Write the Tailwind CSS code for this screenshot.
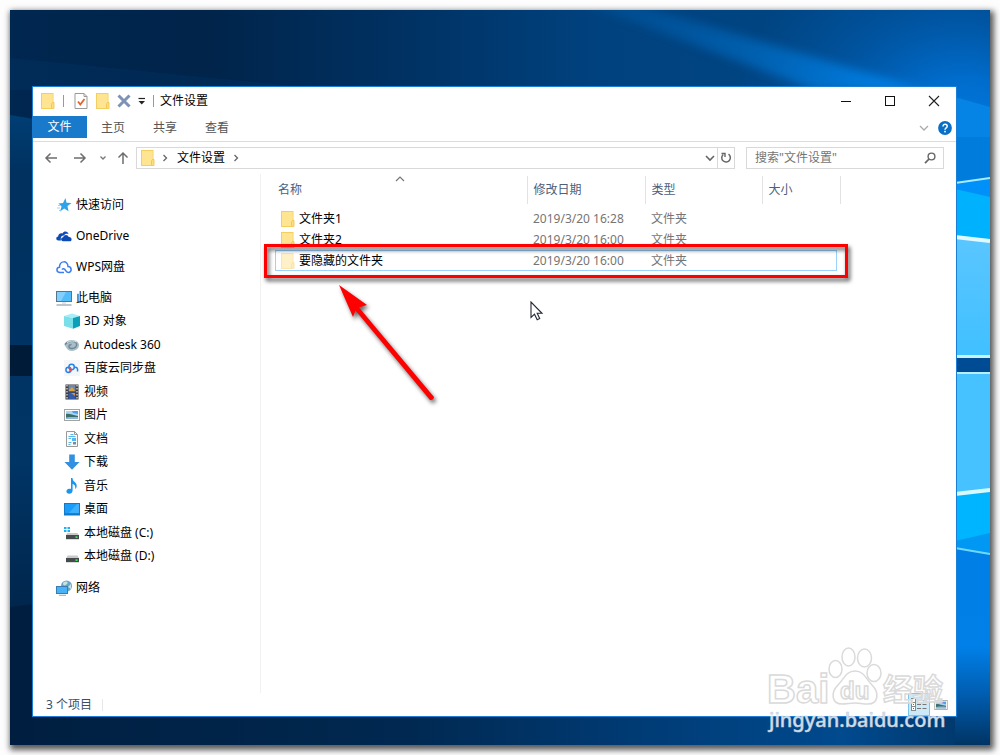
<!DOCTYPE html>
<html lang="zh-CN">
<head>
<meta charset="utf-8">
<meta name="viewport" content="width=device-width, initial-scale=1">
<title>文件设置</title>
<script src="https://cdn.jsdelivr.net/npm/@tailwindcss/browser@4"></script>
</head>
<body class="flex min-h-screen bg-[#fdfdfd] p-2.5 font-['Noto_Sans','Noto_Sans_CJK_SC',sans-serif] text-xs text-black">

<!-- shared symbols -->
<svg class="hidden" aria-hidden="true">
  <symbol id="folder" viewBox="0 0 14 16">
    <rect x="0.5" y="0.5" width="11.5" height="15" fill="#ffe591" stroke="#f3cf62"/>
    <path d="M1 1h10.500v14.500H1z" fill="#ffe591"/>
    <path d="M10.500 15.500V11l1-1.500h1.500v6z" fill="#fddf80" stroke="#efc54f" stroke-width=".9"/>
    <path d="M.500 15.500h12" stroke="#f3cf62"/>
  </symbol>
  <symbol id="right" viewBox="0 0 8 8"><path d="M2.500 1l3 3-3 3" fill="none" stroke="#666" stroke-width="1.300"/></symbol>
  <symbol id="picture" viewBox="0 0 16 12">
    <rect x=".5" y=".5" width="15" height="11" fill="#fff" stroke="#a3a3a3"/>
    <rect x="2" y="2" width="12" height="8" fill="#a9d6f7"/>
    <path d="M8 2h6v3L9 4z" fill="#4d9df0"/>
    <path d="M2 5c3-1 6 1 12 2v3H2z" fill="#3c6f68"/>
    <path d="M2 8.500c4-.8 8-.5 12-.5v2H2z" fill="#8fb9dc"/>
  </symbol>
</svg>

<div class="relative flex flex-1 overflow-visible bg-[#002d5a] pt-[76px] pr-[33px] pb-[28px] pl-[22px] shadow-[2px_3px_6px_2px_rgba(0,0,0,0.65)]">

  <!-- wallpaper -->
  <svg class="absolute inset-0 size-full" viewBox="10 10 980 735" preserveAspectRatio="none" aria-hidden="true">
    <defs>
      <linearGradient id="top" x1="0" x2="1" y1="0" y2="0">
        <stop offset="0" stop-color="#002750"/><stop offset=".2" stop-color="#00244a"/><stop offset=".38" stop-color="#003060"/><stop offset=".6" stop-color="#00427f"/><stop offset=".85" stop-color="#004684"/><stop offset="1" stop-color="#003f78"/>
      </linearGradient>
      <radialGradient id="glow" gradientUnits="userSpaceOnUse" cx="965" cy="150" r="240">
        <stop offset="0" stop-color="#0082ee"/><stop offset=".3" stop-color="#0074da" stop-opacity=".85"/><stop offset=".65" stop-color="#0060b8" stop-opacity=".45"/><stop offset="1" stop-color="#0054a4" stop-opacity="0"/>
      </radialGradient>
      <linearGradient id="beam" gradientUnits="userSpaceOnUse" x1="600" y1="10" x2="890" y2="90">
        <stop offset="0" stop-color="#005ba8" stop-opacity=".35"/><stop offset="1" stop-color="#0086ee" stop-opacity=".8"/>
      </linearGradient>
      <linearGradient id="bottom" x1="0" x2="1" y1="0" y2="0">
        <stop offset="0" stop-color="#001f40"/><stop offset=".4" stop-color="#002850"/><stop offset=".65" stop-color="#003c76"/><stop offset=".85" stop-color="#004a8e"/><stop offset="1" stop-color="#003464"/>
      </linearGradient>
      <linearGradient id="left" x1="0" x2="0" y1="0" y2="1">
        <stop offset="0" stop-color="#003e74"/><stop offset=".12" stop-color="#00315f"/><stop offset=".7" stop-color="#003566"/><stop offset="1" stop-color="#00264c"/>
      </linearGradient>
      <linearGradient id="fall" x1="0" x2="0" y1="0" y2="1">
        <stop offset="0" stop-color="#0080e6"/><stop offset=".5" stop-color="#0080e8"/><stop offset=".75" stop-color="#005cae"/><stop offset="1" stop-color="#003464"/>
      </linearGradient>
      <linearGradient id="pane" x1="0" x2="0" y1="0" y2="1">
        <stop offset="0" stop-color="#5ac6ff"/><stop offset="1" stop-color="#40c0ff"/>
      </linearGradient>
      <filter id="soft" x="-10%" y="-20%" width="120%" height="140%"><feGaussianBlur stdDeviation="5"/></filter>
    </defs>
    <rect x="10" y="10" width="980" height="735" fill="url(#top)"/>
    <path d="M10 58L335 90H10z" fill="#00396b" opacity=".3"/>
    <rect x="700" y="10" width="290" height="190" fill="url(#glow)"/>
    <path d="M575 0h45L925 90H815z" fill="url(#beam)" filter="url(#soft)"/>
    <rect x="10" y="700" width="980" height="45" fill="url(#bottom)"/>
    <path d="M10 115l24 4v490H10z" fill="url(#left)"/>
    <rect x="10" y="345" width="24" height="31" fill="#001b38"/>
    <path d="M10 607l24-3v141H10z" fill="#001f40"/>
    <rect x="955" y="125" width="35" height="60" fill="#007cdc"/>
    <path d="M955 97l35 10v30h-35z" fill="#0584e6"/>
    <path d="M955 183l35-5v64l-35-5z" fill="#00b2fd"/>
    <path d="M955 183l35-5v19l-35-8z" fill="#0090fa"/>
    <path d="M955 183l35-5" stroke="#a8ecff" stroke-width="2"/>
    <path d="M955 237l35 4v116h-35z" fill="url(#pane)"/>
    <path d="M955 237l35 4" stroke="#e0faff" stroke-width="4"/>
    <rect x="955" y="355" width="35" height="3" fill="#c8f2ff"/>
    <rect x="955" y="358" width="35" height="14" fill="#004c94"/>
    <path d="M955 372h35v118l-35 4z" fill="#45c2ff"/>
    <rect x="955" y="372" width="35" height="2" fill="#b8eeff"/>
    <path d="M955 494l35-4v64l-35-6z" fill="#00b5ff"/>
    <path d="M955 541l35-8v20l-35-5z" fill="#0098f2"/>
    <path d="M955 494l35-4" stroke="#d8f8ff" stroke-width="4"/>
    <path d="M955 548l35 6v191h-35z" fill="url(#fall)"/>
    <path d="M955 548l35 6" stroke="#70d8ff" stroke-width="2"/>
  </svg>

  <!-- explorer window -->
  <main class="relative flex flex-1 flex-col border border-[#1b7fd6] bg-white">

    <header class="flex h-[27px] items-center pl-2">
      <svg class="h-4 w-3.5"><use href="#folder"/></svg>
      <span class="ml-2 h-3 w-px bg-[#999]"></span>
      <button class="ml-2.5" aria-label="属性"><svg class="h-4 w-3.5" viewBox="0 0 14 16"><path d="M1 .5h9l3 3v12H1z" fill="#fff" stroke="#999"/><path d="M10 .5v3h3" fill="none" stroke="#999"/><path d="M4 8.500l2.300 3L10.500 6" fill="none" stroke="#e8622c" stroke-width="1.800"/></svg></button>
      <button class="ml-2" aria-label="新建文件夹"><svg class="h-4 w-3.5"><use href="#folder"/></svg></button>
      <button class="ml-[7px]" aria-label="删除"><svg class="h-3.5 w-3.5" viewBox="0 0 14 14"><path d="M1.500 1.500l11 11M12.500 1.500l-11 11" stroke="#7d92b5" stroke-width="3"/></svg></button>
      <button class="ml-[7px]" aria-label="自定义快速访问工具栏"><svg class="h-2 w-2" viewBox="0 0 8 8"><path d="M.500 1.500h6.500" stroke="#222" stroke-width="1.200"/><path d="M.500 4h6.500L3.750 7.500z" fill="#222"/></svg></button>
      <span class="ml-[7px] h-3 w-px bg-[#999]"></span>
      <h1 class="ml-1.5 flex-1">文件设置</h1>
      <button class="flex h-full w-11 items-center justify-center" aria-label="最小化"><svg class="h-3 w-3" viewBox="0 0 12 12"><path d="M1 6.500h10" stroke="#111"/></svg></button>
      <button class="flex h-full w-11 items-center justify-center" aria-label="最大化"><svg class="h-3 w-3" viewBox="0 0 12 12"><rect x="1.500" y="1.500" width="9" height="9" fill="none" stroke="#111"/></svg></button>
      <button class="flex h-full w-11 items-center justify-center" aria-label="关闭"><svg class="h-3 w-3" viewBox="0 0 12 12"><path d="M1 1l10 10M11 1L1 11" stroke="#222" stroke-width="1.100"/></svg></button>
    </header>

    <div class="flex h-[28px] items-start border-b border-[#dcdcdc] pt-0.5 text-[#555]">
      <button class="-ml-px h-[22px] w-[55px] bg-[#1979ca] text-white">文件</button>
      <button class="h-6 w-[52px]">主页</button>
      <button class="h-6 w-[52px]">共享</button>
      <button class="h-6 w-[52px]">查看</button>
      <button class="ml-auto flex h-6 w-5 items-center justify-center" aria-label="展开功能区"><svg class="h-2 w-2.5" viewBox="0 0 10 8"><path d="M1 2l4 4 4-4" fill="none" stroke="#aaa" stroke-width="1.300"/></svg></button>
      <button class="mr-1 ml-1 flex h-6 items-center" aria-label="帮助"><svg class="h-3.5 w-3.5" viewBox="0 0 14 14"><circle cx="7" cy="7" r="6.900" fill="#0a6fc6"/><path d="M5 5.400c0-2.800 4.200-2.600 4.200-.2C9.200 6.900 7 6.800 7 8.800" fill="none" stroke="#fff" stroke-width="1.500"/><rect x="6.200" y="9.800" width="1.600" height="1.600" fill="#fff"/></svg></button>
    </div>

    <div class="flex h-8 items-center pr-3 pl-[11px]">
      <button aria-label="后退"><svg class="h-3 w-3.5" viewBox="0 0 14 12"><path d="M13 6H2M6.500 1.500L2 6l4.500 4.500" fill="none" stroke="#6e6e6e" stroke-width="1.500"/></svg></button>
      <button class="ml-[15px]" aria-label="前进"><svg class="h-3 w-3.5" viewBox="0 0 14 12"><path d="M1 6h11M7.500 1.500L12 6l-4.500 4.500" fill="none" stroke="#6e6e6e" stroke-width="1.500"/></svg></button>
      <button class="ml-3" aria-label="最近位置"><svg class="h-2 w-2" viewBox="0 0 8 8"><path d="M1.500 2.500L4 5l2.500-2.500" fill="none" stroke="#777" stroke-width="1.300"/></svg></button>
      <button class="ml-[9px]" aria-label="上移"><svg class="h-3.5 w-3.5" viewBox="0 0 14 14"><path d="M7 13V2M2.500 6.500L7 2l4.500 4.500" fill="none" stroke="#6e6e6e" stroke-width="1.500"/></svg></button>
      <nav class="ml-1.5 flex h-[22px] flex-1 items-center border border-[#d9d9d9] pl-1" aria-label="地址">
        <svg class="h-4 w-3.5"><use href="#folder"/></svg>
        <svg class="ml-1.5 h-2 w-2"><use href="#right"/></svg>
        <a href="#" class="ml-2">文件设置</a>
        <svg class="ml-[7px] h-2 w-2"><use href="#right"/></svg>
        <button class="mr-0.5 ml-auto" aria-label="历史"><svg class="h-2 w-2.5" viewBox="0 0 10 8"><path d="M1 2l4 4 4-4" fill="none" stroke="#666" stroke-width="1.600"/></svg></button>
        <button class="flex h-full w-[17px] items-center justify-center border-l border-[#d9d9d9]" aria-label="刷新"><svg class="h-3 w-3" viewBox="0 0 12 12"><path d="M8.500 2.200A4.300 4.300 0 1 1 3.200 2.500" fill="none" stroke="#666" stroke-width="1.500"/><path d="M1.500 1.500h3.500V5" fill="none" stroke="#666" stroke-width="1.400"/></svg></button>
      </nav>
      <label class="ml-[11px] flex h-[22px] w-[198px] items-center border border-[#d9d9d9] pr-[7px] pl-2">
        <input class="min-w-0 flex-1 outline-none placeholder:text-[#757575]" type="search" aria-label="搜索" placeholder="搜索&quot;文件设置&quot;">
        <svg class="h-3 w-3" viewBox="0 0 12 12"><circle cx="7.500" cy="4.500" r="3.400" fill="none" stroke="#666" stroke-width="1.400"/><path d="M5 7L1 11.200" stroke="#666" stroke-width="1.800"/></svg>
      </label>
    </div>

    <div class="flex flex-1">
      <nav class="w-[228px] shrink-0 border-r border-[#f1f1f1] pt-[19px] pl-[23px]" aria-label="导航窗格">
        <ul class="flex flex-col gap-2">
          <li class="flex h-[23px] items-center gap-1"><svg class="h-4 w-4" viewBox="0 0 16 16"><path d="M9.500 1l1 4.700 5 .3-4 2.900 1 5.300L8.200 11.500 4 14.500l1.600-5L2.500 6.400l4.500-.5z" fill="#2fa2ea"/><path d="M2 8.500h2M1 11h3M3 13.500h1" stroke="#9bd5f8"/></svg><a href="#">快速访问</a></li>
          <li class="flex h-[23px] items-center gap-1"><svg class="h-4 w-4" viewBox="0 0 16 16"><path d="M2.500 12.500C-.500 12.500-.300 8.500 2.200 8.500 2 5.500 5.200 4.600 6.500 5.500c1.400-3 5.600-2.500 6 .8-2-1-3.700-.3-4.500 1.200-2-.3-4 1.500-3 5z" fill="#0b4bb3"/><path d="M7 13.200c-2.600 0-2.500-4 .2-4C7.800 6.300 12 6.200 12.700 9c3.300-.4 4 4.200 1 4.200z" fill="#0b4bb3"/></svg><a href="#">OneDrive</a></li>
          <li class="flex h-[23px] items-center gap-1"><svg class="h-4 w-4" viewBox="0 0 16 16"><path d="M8 13.500H4C0 13.500 0 8.700 3.500 8.300 3.500 1.200 12 1.200 12 7.500c4 0 4.200 6 .3 6-2.500 0-2.500-2-3.600-3.300-1-.9-2.400-.5-2.400.5" fill="none" stroke="#3c7df0" stroke-width="1.500"/></svg><a href="#">WPS网盘</a></li>
          <li>
            <ul class="grid h-[282px] auto-rows-fr">
              <li class="flex items-center gap-1"><svg class="h-4 w-4" viewBox="0 0 16 16"><rect x=".5" y="1.500" width="15" height="10" fill="#55bcfa" stroke="#54778f"/><path d="M1 2h9L5 11H1z" fill="#83d0ff"/><path d="M6 13h4" stroke="#c3ccd3"/><path d="M.500 15h15" stroke="#9aa8b5" stroke-width="1.300"/></svg><a href="#">此电脑</a></li>
              <li class="flex items-center gap-1 pl-2"><svg class="h-4 w-4" viewBox="0 0 16 16"><path d="M0 3l8-2.500L16 3 9 5z" fill="#a5eef5"/><path d="M0 3l9 2v10.800L0 13z" fill="#7adfe9"/><path d="M9 5l7-2v10l-7 2.800z" fill="#0aa0b8"/></svg><a href="#">3D 对象</a></li>
              <li class="flex items-center gap-1 pl-2"><svg class="h-4 w-4" viewBox="0 0 16 16"><path d="M.500 8C1 3 9 1.500 13 4.500c4 3 2 9-5 9.500-3 0-5-1.500-5.500-3z" fill="#a9bec9"/><path d="M1 7.500C4 3.500 11 3.500 12.500 6.500c1 2.500-1.500 5-4.500 5-4 0-4-4-.5-4" fill="none" stroke="#6f8896" stroke-width="1.500"/><path d="M3 5.500c3-2 7-2 9.500-.5" fill="none" stroke="#e3edf2"/></svg><a href="#">Autodesk 360</a></li>
              <li class="flex items-center gap-1 pl-2"><svg class="h-4 w-4" viewBox="0 0 16 16"><rect width="16" height="16" fill="#f5f6f8"/><circle cx="4.500" cy="9.800" r="2.600" fill="none" stroke="#2384ee" stroke-width="1.500"/><circle cx="7.600" cy="7" r="2.700" fill="none" stroke="#2384ee" stroke-width="1.500"/><path d="M4.500 8c2.500 0 2.500 3.500.2 3.500" fill="none" stroke="#ec4a4a" stroke-width="1.500"/><path d="M10 7.500c3-1 4 1 3.500 4" fill="none" stroke="#2384ee" stroke-width="1.500"/></svg><a href="#">百度云同步盘</a></li>
              <li class="flex items-center gap-1 pl-2"><svg class="h-4 w-4" viewBox="0 0 16 16"><rect x="1.500" y=".5" width="13" height="15" fill="#3b3b3f"/><rect x="4.500" y="1" width="7" height="6.500" fill="#7187ad"/><rect x="4.500" y="8.500" width="7" height="6.500" fill="#315cae"/><path d="M5 6l3-3 3 4H5z" fill="#dca33c"/><path d="M7 9h4v3z" fill="#e58645"/><path d="M3 1v14M13 1v14" stroke="#ddd" stroke-width="1.300" stroke-dasharray="1.500 1.500"/></svg><a href="#">视频</a></li>
              <li class="flex items-center gap-1 pl-2"><svg class="h-3 w-4"><use href="#picture"/></svg><a href="#">图片</a></li>
              <li class="flex items-center gap-1 pl-2"><svg class="h-4 w-4" viewBox="0 0 16 16"><path d="M2.500.500h8l3 3v12h-11z" fill="#fafafa" stroke="#999"/><path d="M10.500.500v3h3" fill="none" stroke="#999"/><path d="M6.500 3.500h3M4.500 5.500h7M4.500 7.500h2.500M4.500 11.500h3M4.500 13.500h2" stroke="#55b5ec"/><rect x="8" y="7" width="4" height="3" fill="#55b5ec"/><rect x="9" y="11" width="3" height="2.500" fill="#6b8fa5"/></svg><a href="#">文档</a></li>
              <li class="flex items-center gap-1 pl-2"><svg class="h-4 w-4" viewBox="0 0 16 16"><path d="M5.200.500h5.600v7.500h4.700L8 15.700.500 8h4.700z" fill="#3390e0"/></svg><a href="#">下载</a></li>
              <li class="flex items-center gap-1 pl-2"><svg class="h-4 w-4" viewBox="0 0 16 16"><path d="M7 0h1.500c0 4 4.500 4 4.200 8-.1 1.500-.7 2.500-1.500 3 .5-3-.7-4.500-2.600-5v6.500c0 2-1.600 3.300-3.400 3.300-3.700 0-3.700-4.600 0-5 .7-.1 1.300 0 1.800.2z" fill="#1b96f0"/></svg><a href="#">音乐</a></li>
              <li class="flex items-center gap-1 pl-2"><svg class="h-4 w-4" viewBox="0 0 16 16"><rect x=".5" y="2.500" width="15" height="11.500" fill="#1a9dfa" stroke="#1679c4"/><path d="M5 12L13 3h2v9z" fill="#3fb0fd"/><path d="M1 13h14" stroke="#0d67b4"/></svg><a href="#">桌面</a></li>
              <li class="flex items-center gap-1 pl-2"><svg class="h-4 w-4" viewBox="0 0 16 16"><path d="M0 2h2.500v2H0zM3.500 2H6v2H3.500zM0 5h2.500v2H0zM3.500 5H6v2H3.500z" fill="#1eb0f2"/><path d="M3 8h10.500l1.500 2.500H2z" fill="#c9c9c9"/><rect x="2" y="10" width="13" height="4.200" fill="#454b4d"/><rect x="11.500" y="11.300" width="2" height="1.700" fill="#3be85b"/></svg><a href="#">本地磁盘 (C:)</a></li>
              <li class="flex items-center gap-1 pl-2"><svg class="h-4 w-4" viewBox="0 0 16 16"><path d="M3.500 7.500h10L15 10.500H2z" fill="#c9c9c9"/><rect x="2" y="10" width="13" height="4.200" fill="#454b4d"/><rect x="11.500" y="11.300" width="2" height="1.700" fill="#3be85b"/></svg><a href="#">本地磁盘 (D:)</a></li>
            </ul>
          </li>
          <li class="flex h-[23px] items-center gap-1"><svg class="h-4 w-4" viewBox="0 0 16 16"><circle cx="10.500" cy="6" r="5.500" fill="#6aa5c4"/><path d="M7 3c3-3 6-1 4 1S7 6 7 3zM12 7l3-3v5z" fill="#c5e2e4"/><rect x=".5" y="6.500" width="11" height="7" fill="#47b2f8" stroke="#3b7cae"/><path d="M3 15.300h7" stroke="#a8b5bf" stroke-width="1.200"/></svg><a href="#">网络</a></li>
        </ul>
      </nav>

      <section class="relative min-w-0 flex-1 pl-3.5" aria-label="文件列表">
        <svg class="absolute top-px left-[134px] h-2 w-2.5" viewBox="0 0 10 8" aria-hidden="true"><path d="M1 6l4-4 4 4" fill="none" stroke="#777" stroke-width="1.200"/></svg>
        <table class="mt-0.5 w-[566px] table-fixed text-left text-[#757575]">
          <thead class="text-[#4c607a]">
            <tr class="h-7">
              <th class="w-[252px] border-r border-[#e2e2e2] pl-[3px] font-normal">名称</th>
              <th class="w-[118px] border-r border-[#e2e2e2] pl-1.5 font-normal">修改日期</th>
              <th class="w-[117px] border-r border-[#e2e2e2] pl-1.5 font-normal">类型</th>
              <th class="border-r border-[#e2e2e2] pl-1.5 font-normal">大小</th>
            </tr>
          </thead>
          <tbody>
            <tr class="h-1"><td colspan="4"></td></tr>
            <tr class="h-[21px]">
              <td class="pl-1.5 text-black"><span class="flex items-center gap-1"><svg class="h-4 w-3.5"><use href="#folder"/></svg>文件夹1</span></td>
              <td class="pl-1.5">2019/3/20 16:28</td><td class="pl-1.5">文件夹</td><td></td>
            </tr>
            <tr class="h-[21px]">
              <td class="pl-1.5 text-black"><span class="flex items-center gap-1"><svg class="h-4 w-3.5"><use href="#folder"/></svg>文件夹2</span></td>
              <td class="pl-1.5">2019/3/20 16:00</td><td class="pl-1.5">文件夹</td><td></td>
            </tr>
            <tr class="relative h-[21px]">
              <td class="pl-1.5 text-black"><span class="absolute inset-y-0 right-1 left-0 border border-[#99d1ff]"></span><span class="flex items-center gap-1"><svg class="h-4 w-3.5 opacity-50"><use href="#folder"/></svg>要隐藏的文件夹</span></td>
              <td class="pl-1.5">2019/3/20 16:00</td><td class="pl-1.5">文件夹</td><td></td>
            </tr>
          </tbody>
        </table>

        <!-- annotations over the list -->
        <div class="pointer-events-none absolute top-[70px] left-[3px] h-[34px] w-[584px] border-[3px] border-[#fe0000] drop-shadow-[2px_3px_2px_rgba(0,0,0,0.7)]"></div>
        <svg class="absolute top-[106px] left-[70px] h-[130px] w-[116px]" viewBox="0 0 116 130" aria-hidden="true">
          <g class="drop-shadow-[2px_3px_2px_rgba(0,0,0,0.6)]"><path d="M8 5l28 20-8 2.500L103 117q-.5 3.500-4 3L24.500 30.500 22 37z" fill="#fe0000"/></g>
        </svg>
        <svg class="absolute top-[127px] left-[269px] h-5 w-3.5" viewBox="0 0 14 20" aria-hidden="true"><path d="M1 1v15.500l3.500-3.300 2.700 5.500 2.500-1.200-2.500-5.200H12z" fill="#fff" stroke="#222638" stroke-width="1.100"/></svg>
      </section>
    </div>

    <footer class="flex h-[23px] items-center pr-2 pl-[13px] text-[#3c4d66]">
      <span>3 个项目</span>
      <span class="ml-2.5 h-3 w-px bg-[#e8e8e8]"></span>
      <button class="ml-auto flex h-[23px] w-[22px] items-center justify-center border border-[#7cc4e8] bg-[#cce9f8]" aria-label="详细信息"><svg class="h-3.5 w-4" viewBox="0 0 16 14"><rect x=".5" y=".5" width="4" height="12" fill="#fff" stroke="#888"/><path d="M.500 4.500h4M.500 8.500h4" stroke="#888"/><path d="M6 2.500h4M11.500 2.500h4M6 6.500h4M11.500 6.500h4M6 10.500h4M11.500 10.500h4" stroke="#777"/><path d="M2 6.500h1" stroke="#36f"/><path d="M2 10.500h1" stroke="#e33"/></svg></button>
      <button class="ml-1" aria-label="大图标"><svg class="h-2.5 w-3.5"><use href="#picture"/></svg></button>
    </footer>
  </main>

  <!-- site watermark -->
  <svg class="pointer-events-none absolute right-[34px] bottom-0 h-[105px] w-[190px]" viewBox="0 0 190 105" role="img" aria-label="百度经验">
    <g fill="#fff" fill-opacity=".5" stroke="#dadada" stroke-width="1.500" class="font-['Liberation_Sans','Noto_Sans_CJK_SC',sans-serif] font-bold">
      <text x="1" y="63" font-size="40">Bai</text>
      <ellipse cx="69.500" cy="29" rx="6.500" ry="8.500"/>
      <ellipse cx="82.500" cy="17" rx="6.500" ry="9"/>
      <ellipse cx="98.500" cy="18" rx="7" ry="9"/>
      <ellipse cx="108" cy="33" rx="7" ry="8.500"/>
      <path d="M89 31c9 0 11 8 17 14 8 8 6 19-4 19-6 0-8-1-13-1s-8 1-13 1c-10 0-12-11-4-19 6-6 8-14 17-14z"/>
      <text x="74" y="59" font-size="24">du</text>
      <text x="117" y="60" font-size="30">经验</text>
    </g>
    <text x="3" y="87" font-size="20" fill="#d2dfec" stroke="#c0ccd8" stroke-width=".5" class="font-['Noto_Sans',sans-serif] font-medium">jingyan.baidu.com</text>
  </svg>
</div>
</body>
</html>
